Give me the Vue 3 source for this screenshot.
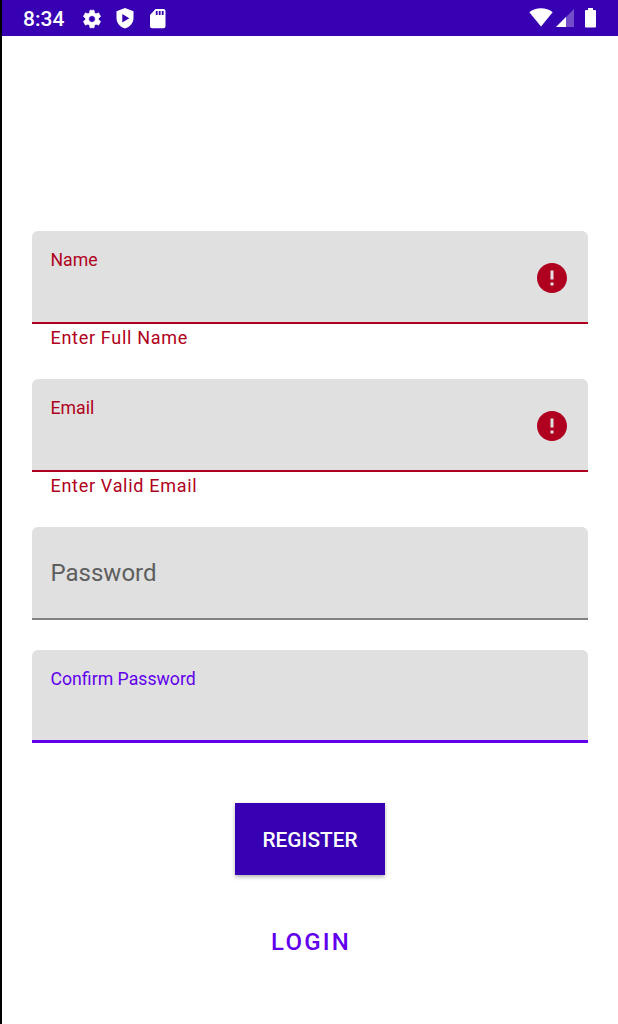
<script setup>
const fields = [
  { label: 'Name', state: 'error', helper: 'Enter Full Name' },
  { label: 'Email', state: 'error', helper: 'Enter Valid Email' },
  { label: 'Password', state: 'idle', helper: '' },
  { label: 'Confirm Password', state: 'focused', helper: '' },
]
</script>

<template>
  <div class="screen">
    <header class="status-bar">
      <span class="clock">8:34</span>
      <svg class="gear" viewBox="0 0 24 24"><path d="M19.14 12.94c.04-.3.06-.61.06-.94 0-.32-.02-.64-.07-.94l2.03-1.58c.18-.14.23-.41.12-.61l-1.92-3.32c-.12-.22-.37-.29-.59-.22l-2.39.96c-.5-.38-1.03-.7-1.62-.94L14.4 2.81c-.04-.24-.24-.41-.48-.41h-3.84c-.24 0-.43.17-.47.41l-.36 2.54c-.59.24-1.13.57-1.62.94l-2.39-.96c-.22-.08-.47 0-.59.22L2.74 8.87c-.12.21-.08.47.12.61l2.03 1.58c-.05.3-.09.63-.09.94s.02.64.07.94l-2.03 1.58c-.18.14-.23.41-.12.61l1.92 3.32c.12.22.37.29.59.22l2.39-.96c.5.38 1.03.7 1.62.94l.36 2.54c.05.24.24.41.48.41h3.84c.24 0 .44-.17.47-.41l.36-2.54c.59-.24 1.13-.56 1.62-.94l2.39.96c.22.08.47 0 .59-.22l1.92-3.32c.12-.22.07-.47-.12-.61l-2.01-1.58zM12 15.6c-1.98 0-3.6-1.62-3.6-3.6s1.62-3.6 3.6-3.6 3.6 1.62 3.6 3.6-1.62 3.6-3.6 3.6z" /></svg>
      <svg class="shield" viewBox="0 0 18 21"><path fill-rule="evenodd" d="M9 0 17.5 3.2V10c0 5-3.4 9-8.5 10.4C3.9 19 .5 15 .5 10V3.200zM6.300 6v8.600l7-4.300z" /></svg>
      <svg class="sd" viewBox="0 0 16 20"><path fill-rule="evenodd" d="M5.500 0h8a2 2 0 0 1 2 2v15.300a2 2 0 0 1-2 2H2a2 2 0 0 1-2-2V6zM5.800 2v4h1.800V2zM8.800 2v4h1.800V2zM11.800 2v4h1.800V2z" /></svg>
      <span class="spacer"></span>
      <svg class="wifi" viewBox="0 0 24 19"><path d="M12 18.500.3 4.300C3.500 1.700 7.500.3 12 .3s8.500 1.400 11.700 4z" /></svg>
      <svg class="signal" viewBox="0 0 18 18"><path opacity=".3" d="M0 18 18 0v18z" /><path d="M0 18 10 8v10z" /></svg>
      <svg class="battery" viewBox="0 0 11 20"><path d="M3 0h5v2h2a1 1 0 0 1 1 1v15.500a1 1 0 0 1-1 1H1a1 1 0 0 1-1-1V3a1 1 0 0 1 1-1h2z" /></svg>
    </header>

    <main class="form">
      <div v-for="f in fields" :key="f.label" class="group" :class="f.state">
        <div class="field">
          <label class="label">{{ f.label }}</label>
          <svg v-if="f.state === 'error'" class="alert" viewBox="0 0 24 24"><path d="M12 2C6.480 2 2 6.480 2 12s4.480 10 10 10 10-4.480 10-10S17.520 2 12 2zm1 15h-2v-2h2v2zm0-4h-2V7h2v6z" /></svg>
        </div>
        <div v-if="f.helper" class="helper">{{ f.helper }}</div>
      </div>
      <button class="register">REGISTER</button>
      <button class="login">LOGIN</button>
    </main>
  </div>
</template>

<style>
body {
  margin: 0;
}
</style>

<style scoped>
.screen {
  box-sizing: border-box;
  width: 618px;
  height: 1024px;
  border-left: 2px solid #000;
  background: #fff;
  font-family: Roboto, sans-serif;
  overflow: hidden;
}
.status-bar {
  display: flex;
  align-items: flex-start;
  box-sizing: border-box;
  height: 36px;
  padding: 8px 22px 0 21px;
  background: #3700b3;
  color: #fff;
}
.status-bar svg {
  fill: #fff;
  flex: none;
}
.clock {
  width: 57.500px;
  font-size: 21px;
  font-weight: 500;
  line-height: 22px;
}
.status-bar .gear { width: 22px; height: 22px; margin-top: -0.500px; stroke: #fff; stroke-width: 0.600px; }
.shield { width: 18px; height: 21px; margin-left: 13px; }
.sd { width: 16px; height: 20px; margin: 0.500px 0 0 16px; }
.spacer { flex: 1; }
.wifi { width: 24px; height: 19px; }
.signal { width: 18px; height: 18px; margin: 1px 0 0 3px; }
.battery { width: 11px; height: 20px; margin-left: 11px; }

.form {
  display: flex;
  flex-direction: column;
  padding: 195px 30px 0;
}
.group {
  --tone: #b00020;
  color: var(--tone);
}
.group.error { height: 148px; }
.group.idle { --tone: #808080; height: 123px; }
.group.focused { --tone: #6200ee; height: 153px; }
.field {
  display: flex;
  justify-content: space-between;
  box-sizing: border-box;
  height: 93px;
  padding: 17px 18px 0 18.500px;
  border-radius: 6px 6px 0 0;
  background: linear-gradient(var(--tone), var(--tone)) bottom / 100% 2px no-repeat #e0e0e0;
}
.focused .field { background-size: 100% 3px; }
.label {
  font-size: 17.700px;
  line-height: 25px;
}
.idle .label {
  margin-top: 14px;
  color: #5e5e5e;
  font-size: 24px;
  line-height: 30px;
}
.alert {
  width: 36px;
  height: 36px;
  margin-top: 12px;
  fill: #b00020;
}
.helper {
  padding-left: 18.500px;
  font-size: 18px;
  line-height: 22px;
  letter-spacing: 0.700px;
  margin-top: 3px;
}
button {
  align-self: center;
  padding: 0;
  border: 0;
  font-family: inherit;
  font-weight: 500;
}
.register {
  width: 150px;
  height: 72px;
  padding-top: 2px;
  background: #3700b3;
  color: #fff;
  font-size: 20.800px;
  box-shadow: 0 2px 4px rgba(0, 0, 0, 0.3);
}
.login {
  height: 40px;
  margin-top: 47px;
  padding-left: 2px;
  background: none;
  color: #6200ee;
  font-size: 24px;
  letter-spacing: 2.200px;
}
</style>
